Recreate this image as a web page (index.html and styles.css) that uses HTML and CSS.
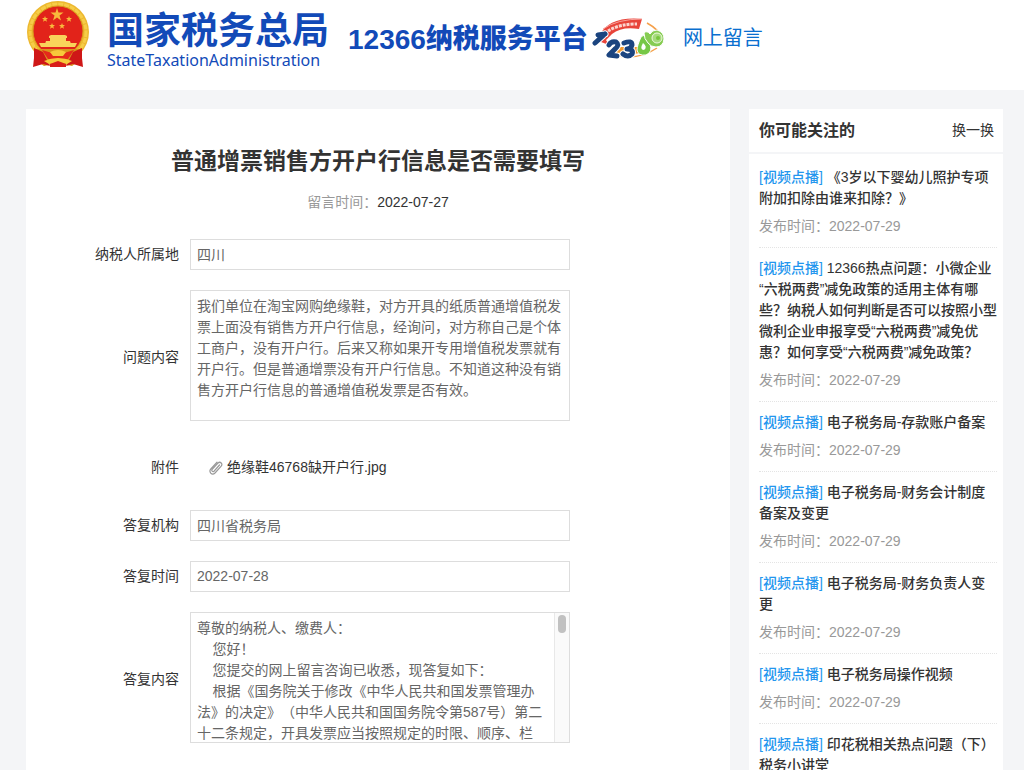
FILE: index.html
```html
<!DOCTYPE html>
<html lang="zh-CN">

<head>
    <meta charset="UTF-8">
    <meta name="viewport" content="width=device-width, initial-scale=1.0">
    <title>网上留言</title>
    <link rel="stylesheet" href="styles.css">
</head>

<body>
    <header class="header">
        <svg class="emblem" viewBox="0 0 64 68" aria-hidden="true">
            <circle cx="32" cy="32" r="31" fill="#edb82f" />
            <circle cx="32" cy="32" r="28" fill="none" stroke="#f6cd48" stroke-width="3" stroke-dasharray="5 1" />
            <circle cx="32" cy="31" r="25" fill="#e2231a" stroke="#d99a1c" />
            <path d="M31 8l1.500 4.500h5l-4 3 1.500 5-4-3-4 3 1.500-5-4-3h5z" fill="#f8b93c" />
            <path id="star" d="M19 16l.8 2h2.200l-1.700 1.500.7 2.200-2-1.300-2 1.300.7-2.200-1.700-1.500h2.200z" fill="#f8b93c" />
            <use href="#star" x="24" />
            <use href="#star" x="7" y="7" />
            <use href="#star" x="17" y="7" />
            <path d="M23 36l2-1h14l2 1v2H23zM24 38h16v3H24zM20 41h24l1 3H19zM13 43h38l-2 4H15z" fill="#f9d35a" />
            <path d="M10 49h44l2 10-10 7-14-3-14 3-10-7z" fill="#d9971d" />
            <path d="M8 48l9 4 7 14-7-2-10 3 1-9zM56 48l-9 4-7 14 7-2 10 3-1-9z" fill="#cf1717" />
            <path d="M16 50l10 3 6-2 6 2 10-3-6 9H22z" fill="#e52a1b" />
            <path d="M24 52q8-4 16 0l-3 4h-10zM18 61q14-6 28 0l-5 3-9-2-9 2z" fill="#f7c93b" />
            <path d="M24 64l8-3 8 3v3H24z" fill="#d91d19" />
        </svg>
        <div class="brand">
            <span class="brand-name">国家税务总局</span>
            <span class="brand-en">StateTaxationAdministration</span>
        </div>
        <div class="platform"><span class="platform-number">12366</span>纳税服务平台</div>
        <svg class="mascot" viewBox="0 0 76 46" aria-hidden="true">
            <path d="M56 8q13 7 15 16M28 41q20 4 38-8" fill="none" stroke="#f5a04a" stroke-width="1.500" />
            <path d="M8 21Q18 1 51 4l-3 10Q31 11 21 19l-6 6 3 5-8-3z" fill="#e8443a" />
            <path d="M12 14Q26 4 51 4" fill="none" stroke="#f8a09a" />
            <path d="M17 16Q28 9 46 9" fill="none" stroke="#fbd5d0" stroke-width="3" stroke-dasharray="3 1" />
            <path d="M22 32h27v6l-12 2-14-2z" fill="#f39a2f" />
            <g fill="none" stroke-linecap="round" stroke-linejoin="round">
                <path d="M4 28L14 19M7 20l7-1M18 30q2-4 7-3 4 3-1 7l-6 6 8 1M33 28q8-3 8 2-1 4-5 4 7 0 5 5-4 4-9 0" stroke="#fff" stroke-width="7" />
                <path d="M4 28L14 19M7 20l7-1M18 30q2-4 7-3 4 3-1 7l-6 6 8 1M33 28q8-3 8 2-1 4-5 4 7 0 5 5-4 4-9 0" stroke="#1b447f" stroke-width="5" />
            </g>
            <path d="M50 22q2-3 5 0l4 7q3 8-4 11-8 1-9-5 0-4 4-13z" fill="#76c846" stroke="#fff" />
            <path d="M52 28q5 4 1 7-5 0-1-7z" fill="#fff" />
            <path d="M53 18q3-3 6 1 2-4 7-4 7 2 7 9-1 8-8 8-5 0-8-4-4-4-4-10z" fill="#86cc52" stroke="#fff" />
            <circle cx="66" cy="23" r="5" fill="#a6da7d" stroke="#eef9df" />
            <circle cx="67" cy="23" r="2" fill="#78c63d" />
        </svg>
        <a class="page-name" href="#">网上留言</a>
    </header>

    <div class="container">
        <main class="card detail">
            <h1>普通增票销售方开户行信息是否需要填写</h1>
            <p class="detail-date">留言时间：<span>2022-07-27</span></p>

            <form class="detail-form">
                <label for="area">纳税人所属地</label>
                <input id="area" type="text" value="四川" readonly>

                <label class="tall" for="question">问题内容</label>
                <textarea id="question" readonly>我们单位在淘宝网购绝缘鞋，对方开具的纸质普通增值税发票上面没有销售方开户行信息，经询问，对方称自己是个体工商户，没有开户行。后来又称如果开专用增值税发票就有开户行。但是普通增票没有开户行信息。不知道这种没有销售方开户行信息的普通增值税发票是否有效。</textarea>

                <span class="file-label">附件</span>
                <a class="file" href="#">
                    <svg class="clip" viewBox="0 0 14 16" aria-hidden="true">
                        <path d="M10.500 5L5 11.200q-1 .8-1.800 0-.8-1 0-1.800L9 3q1.700-1.500 3.200 0 1.400 1.500 0 3.200L6 13q-2.200 2-4.200.2Q0 11 1.800 9L8 2.200" fill="none" stroke="#999" stroke-width="1.200" stroke-linecap="round" />
                    </svg>
                    绝缘鞋46768缺开户行.jpg
                </a>

                <label for="office">答复机构</label>
                <input id="office" type="text" value="四川省税务局" readonly>

                <label for="reply-date">答复时间</label>
                <input id="reply-date" type="text" value="2022-07-28" readonly>

                <label class="tall" for="reply">答复内容</label>
                <div class="scroll-box">
                    <textarea id="reply" readonly>尊敬的纳税人、缴费人：
    您好！
    您提交的网上留言咨询已收悉，现答复如下：
    根据《国务院关于修改《中华人民共和国发票管理办法》的决定》（中华人民共和国国务院令第587号）第二十二条规定，开具发票应当按照规定的时限、顺序、栏</textarea>
                    <div class="scroll-rail">
                        <div class="scroll-thumb"></div>
                    </div>
                </div>
            </form>
        </main>

        <aside class="card sidebar">
            <div class="sidebar-head">
                <h2>你可能关注的</h2>
                <button type="button">换一换</button>
            </div>
            <ul class="news">
                <li>
                    <a href="#"><span class="tag">[视频点播]</span> 《3岁以下婴幼儿照护专项附加扣除由谁来扣除？》</a>
                    <p>发布时间：2022-07-29</p>
                </li>
                <li>
                    <a href="#"><span class="tag">[视频点播]</span> 12366热点问题：小微企业“六税两费”减免政策的适用主体有哪些？纳税人如何判断是否可以按照小型微利企业申报享受“六税两费”减免优惠？如何享受“六税两费”减免政策？</a>
                    <p>发布时间：2022-07-29</p>
                </li>
                <li>
                    <a href="#"><span class="tag">[视频点播]</span> 电子税务局-存款账户备案</a>
                    <p>发布时间：2022-07-29</p>
                </li>
                <li>
                    <a href="#"><span class="tag">[视频点播]</span> 电子税务局-财务会计制度备案及变更</a>
                    <p>发布时间：2022-07-29</p>
                </li>
                <li>
                    <a href="#"><span class="tag">[视频点播]</span> 电子税务局-财务负责人变更</a>
                    <p>发布时间：2022-07-29</p>
                </li>
                <li>
                    <a href="#"><span class="tag">[视频点播]</span> 电子税务局操作视频</a>
                    <p>发布时间：2022-07-29</p>
                </li>
                <li>
                    <a href="#"><span class="tag">[视频点播]</span> 印花税相关热点问题（下）税务小讲堂</a>
                </li>
            </ul>
        </aside>
    </div>
</body>

</html>
```

FILE: styles.css
```css
* {
    box-sizing: border-box;
}

body {
    margin: 0;
    background-color: #f4f5f7;
    color: #333;
    font-family: "Liberation Sans", "Noto Sans CJK SC", sans-serif;
    font-size: 14px;
    line-height: 21px;
    text-spacing-trim: space-all;
}

h1,
h2,
p,
ul {
    margin: 0;
    padding: 0;
}

a {
    color: inherit;
    text-decoration: none;
}

/* header */
.header {
    display: flex;
    align-items: flex-start;
    height: 90px;
    padding-left: 26px;
    background-color: #fff;
    color: #124ab8;
}

.emblem {
    width: 64px;
    height: 68px;
}

.brand {
    display: flex;
    flex-direction: column;
    width: 242px;
    padding: 14px 0 0 17px;
    white-space: nowrap;
}

.brand-name {
    font-size: 37px;
    font-weight: 700;
    line-height: 36px;
}

.brand-en {
    font-family: "Noto Sans", sans-serif;
    font-size: 16px;
    line-height: 20px;
}

.platform {
    display: flex;
    align-items: center;
    height: 78px;
    padding-left: 16px;
    font-size: 27px;
    font-weight: 900;
    white-space: nowrap;
}

.platform-number {
    font-size: 28px;
}

.mascot {
    width: 76px;
    height: 46px;
    margin: 15px 16px 0 3px;
}

.page-name {
    color: #0a6fcf;
    font-size: 20px;
    line-height: 76px;
    white-space: nowrap;
}

/* columns */
.container {
    display: flex;
    gap: 19px;
    padding: 19px 21px 0 26px;
}

.card {
    background-color: #fff;
}

.detail {
    flex: 1;
    padding-top: 36px;
}

.detail h1 {
    font-size: 23px;
    font-weight: 700;
    line-height: 32px;
    text-align: center;
}

.detail-date {
    margin-top: 15px;
    color: #999;
    text-align: center;
}

.detail-date span {
    color: #333;
}

/* question and reply */
.detail-form {
    display: grid;
    grid-template-columns: 153px minmax(0, 380px);
    align-items: center;
    gap: 20px 11px;
    padding: 26px 20px 28px 0;
}

.detail-form label,
.file-label {
    text-align: right;
}

.detail-form .tall {
    padding-top: 4px;
}

.detail-form input,
.detail-form textarea {
    display: block;
    width: 100%;
    margin: 0;
    border: 1px solid #ddd;
    border-radius: 0;
    outline: none;
    background-color: #fff;
    color: #666;
    font: inherit;
    text-spacing-trim: space-all;
}

.detail-form input {
    height: 31px;
    padding: 0 6px 2px;
}

.detail-form textarea {
    height: 131px;
    padding: 5px 6px 0;
    overflow: hidden;
    resize: none;
}

.file-label,
.file {
    padding: 16px 0 12px;
}

.file {
    display: flex;
    align-items: center;
    gap: 4px;
    padding-left: 19px;
}

.clip {
    width: 14px;
    height: 16px;
}

.scroll-box {
    display: flex;
    border: 1px solid #ddd;
}

.detail-form .scroll-box textarea {
    flex: 1;
    height: 129px;
    border: 0;
}

.scroll-rail {
    width: 15px;
    padding: 2px 3px;
    border-left: 1px solid #e8e8e8;
    background-color: #fafafa;
}

.scroll-thumb {
    width: 8px;
    height: 18px;
    border-radius: 4px;
    background-color: #c1c1c1;
}

/* sidebar */
.sidebar {
    width: 254px;
}

.sidebar-head {
    display: flex;
    align-items: center;
    justify-content: space-between;
    height: 45px;
    padding: 0 9px 0 10px;
    border-bottom: 2px solid #f4f5f7;
}

.sidebar-head h2 {
    font-size: 16px;
    font-weight: 700;
}

.sidebar-head button {
    padding: 0;
    border: 0;
    background: none;
    color: #333;
    font: inherit;
    cursor: pointer;
}

.news {
    padding: 3px 6px 0 10px;
    list-style: none;
}

.news li {
    padding: 10px 0;
    border-bottom: 1px dotted #e4e4e4;
}

.news a {
    display: block;
    font-weight: 500;
}

.news p {
    margin-top: 7px;
    color: #999;
}

.tag {
    color: #2396ee;
}
```
